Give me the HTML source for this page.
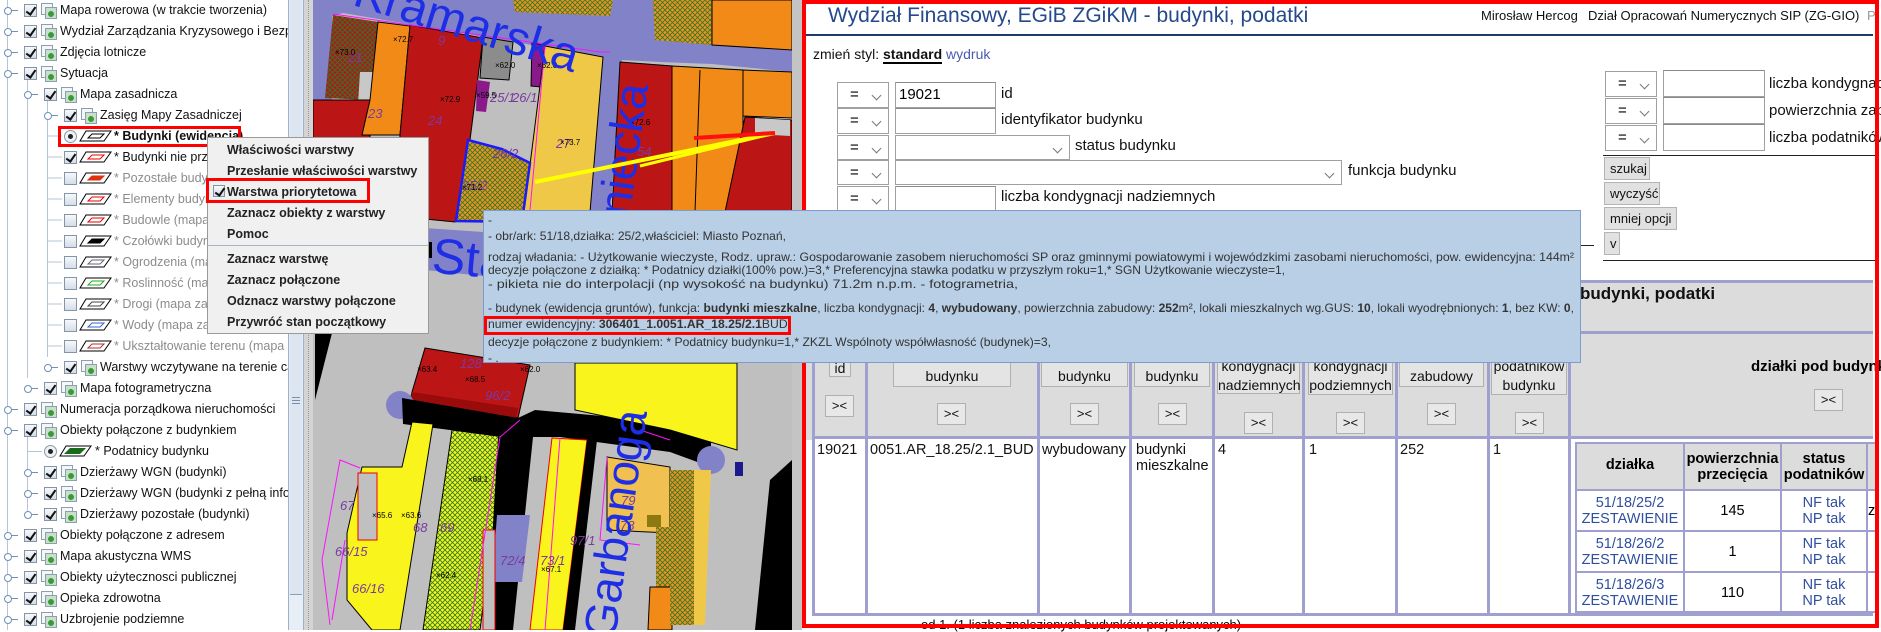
<!DOCTYPE html>
<html><head><meta charset="utf-8">
<style>
*{margin:0;padding:0;box-sizing:border-box}
body{width:1881px;height:630px;overflow:hidden;background:#fff;font-family:"Liberation Sans",Arial,sans-serif;position:relative}
.a{position:absolute}
.row{position:absolute;left:0;width:288px;height:21px;font-size:12.5px;line-height:14px;white-space:nowrap}
.row span.t{position:absolute;top:3px;color:#111}
.row span.g{color:#8c8c8c}
.cb{position:absolute;top:4px;width:13px;height:13px;border:1px solid #8595a8;background:linear-gradient(#f6f8fb,#d5dde8)}
.cb.on::after{content:"";position:absolute;left:3px;top:0px;width:4px;height:8px;border:solid #111;border-width:0 2px 2px 0;transform:rotate(35deg)}
.rd{position:absolute;top:4px;width:13px;height:13px;border-radius:50%;border:1px solid #8a98a8;background:#eef2f6}
.rd::after{content:"";position:absolute;left:3px;top:3px;width:5px;height:5px;border-radius:50%;background:#222}
.ic{position:absolute;top:3px;width:15px;height:15px}
.ic::before{content:"";position:absolute;left:0;top:0;width:10px;height:10px;border:1px solid #8aa0b0;background:#f4f6f8}
.ic::after{content:"";position:absolute;left:4px;top:4px;width:10px;height:10px;border:1px solid #8aa0b0;background:radial-gradient(circle at 50% 60%,#3a9a3a 0 35%,#c8e0c8 40%)}
.hd{position:absolute;top:7px;width:14px;height:7px}
.hd::before{content:"";position:absolute;left:0;top:0;width:6px;height:6px;border:1px solid #6f8fb5;border-radius:50%;background:#fff}
.hd::after{content:"";position:absolute;left:7px;top:3px;width:7px;height:1px;background:#6f8fb5}
.mi{position:absolute;left:227px;font-size:12.5px;font-weight:bold;color:#222;white-space:nowrap}
.sel{position:absolute;border:1px solid #a0a0a0;background:#fff;font-size:15px}
.sel .eq{position:absolute;left:12px;top:3px}
.chev{position:absolute;right:8px;top:9px;width:7px;height:7px;border:solid #777;border-width:0 1px 1px 0;transform:rotate(45deg)}
.inp{position:absolute;border:1px solid #a0a0a0;border-top-color:#8a8a8a;background:#fff;font-size:15px}
.lbl{position:absolute;font-size:15px;color:#111;white-space:nowrap}
.btn{position:absolute;border:1px solid #b4b4b4;background:#e1e1e1;font-size:13px;color:#111;padding:3px 0 0 5px;white-space:nowrap;overflow:hidden}
.hb{position:absolute;border:1px solid #b0b0b0;background:#e4e4e4;font-size:14px;text-align:center;color:#111;line-height:19px}
.xb{position:absolute;width:29px;height:22px;border:1px solid #b0b0b0;background:#e8e8e8;font-size:13px;text-align:center;line-height:20px;color:#111}
.vl{position:absolute;width:3px;background:#9fa0cf}
.dt{position:absolute;font-size:14.5px;color:#111;white-space:nowrap}
.nt{position:absolute;font-size:14.5px;text-align:center;line-height:16px}
.lk{color:#2f4f9f}
</style></head><body>

<svg class="a" style="left:0;top:0" width="1881" height="630" viewBox="0 0 1881 630">
<defs>
<pattern id="hg" width="5" height="5" patternUnits="userSpaceOnUse"><path d="M0 0L5 5M5 0L0 5" stroke="#2a7a2a" stroke-width="0.8"/></pattern>
</defs>
<rect x="313" y="0" width="480" height="630" fill="#bfbfbf"/>
<polygon points="313,0 793,0 793,72 712,64 660,62 622,60 610,215 578,215 590,55 343,13 332,16 332,135 313,135" fill="#8282c8"/>
<polygon points="513,0 613,0 610,16 515,12" fill="#f09020"/><polygon points="513,0 613,0 610,16 515,12" fill="url(#hg)"/>
<polygon points="653,0 712,0 712,45 655,40" fill="#f09020"/><polygon points="653,0 712,0 712,45 655,40" fill="url(#hg)"/>
<polygon points="712,0 792,0 792,50 712,45" fill="#f28a18" stroke="#000" stroke-width="1"/>
<polygon points="333,15 378,22 372,100 325,98" fill="#b01818"/><polygon points="333,15 378,22 372,100 325,98" fill="url(#hg)"/>
<polygon points="360,72 382,72 380,105 358,105" fill="#c8c8c8"/>
<polygon points="313,100 372,100 366,210 313,205" fill="#bb1515" stroke="#000" stroke-width="1"/>
<polygon points="378,22 410,26 400,135 362,135 370,100" fill="#f28a18" stroke="#000" stroke-width="1"/>
<polygon points="410,25 483,38 470,140 455,222 395,216 400,135" fill="#bb1515" stroke="#000" stroke-width="1"/>
<polygon points="483,37 513,42 509,80 480,78" fill="#8c8c8c" stroke="#000" stroke-width="1"/>
<polygon points="477,80 490,82 486,112 476,111" fill="#8a1a8a"/>
<polygon points="532,43 545,45 541,87 531,86" fill="#8a1a8a" stroke="#000" stroke-width="1"/>
<polygon points="545,46 603,57 590,212 522,212 530,165" fill="#f0c848" stroke="#000" stroke-width="1"/>
<polygon points="468,140 502,149 530,163 522,222 456,221" fill="#f09020"/>
<polygon points="468,140 502,149 530,163 522,222 456,221" fill="url(#hg)" stroke="#1a1aff" stroke-width="2.5"/>
<polygon points="620,62 672,66 672,212 612,212" fill="#bb1515" stroke="#000" stroke-width="1"/>
<polygon points="672,66 743,70 743,212 672,212" fill="#f28a18" stroke="#000" stroke-width="1"/>
<polygon points="743,70 792,72 792,118 743,116" fill="#f28a18" stroke="#000" stroke-width="1"/>
<polygon points="745,117 792,120 792,212 725,212" fill="#bb1515" stroke="#000" stroke-width="1"/>
<polygon points="755,118 790,120 790,136 755,134" fill="#c8c8c8"/>
<line x1="700" y1="70" x2="695" y2="212" stroke="#000"/>
<polygon points="425,228 483,232 483,276 425,270" fill="#8282c8"/>
<rect x="427" y="242" width="5" height="16" fill="#000"/>
<polygon points="315,333 332,333 315,400" fill="#000"/>
<polygon points="425,348 530,365 518,418 410,402 412,392" fill="#bb1515" stroke="#000" stroke-width="1"/>
<polygon points="412,392 518,408 516,418 410,402" fill="#9a0c0c"/>
<circle cx="400" cy="405" r="14" fill="#8282c8"/>
<polygon points="402,398 518,418 535,410 670,422 711,433 711,467 670,452 560,437 505,437 403,424" fill="#000"/>
<polygon points="575,363 737,363 737,450 670,430 575,410" fill="#f8f41c" stroke="#000" stroke-width="1"/>
<circle cx="711" cy="460" r="14" fill="#8282c8"/>
<rect x="735" y="462" width="8" height="14" fill="#1a1a8a"/>
<polygon points="412,422 433,424 400,630 372,630 347,600 347,533 362,467 402,467" fill="#f8f41c" stroke="#000" stroke-width="1"/>
<rect x="358" y="473" width="19" height="67" fill="#c0c0c0" stroke="#e00" stroke-width="1"/>
<polygon points="452,430 505,437 480,630 423,630" fill="#f8f41c"/>
<polygon points="452,430 505,437 480,630 423,630" fill="url(#hg)" stroke="#000" stroke-width="1"/>
<polygon points="498,437 533,437 513,630 487,630" fill="#000"/>
<polygon points="497,515 530,515 522,582 492,582" fill="#8282c8"/>
<rect x="483" y="530" width="12" height="100" fill="#c0c0c0" stroke="#e00" stroke-width="1"/>
<polygon points="552,438 587,440 563,630 530,630" fill="#f8f41c" stroke="#e00" stroke-width="1"/>
<polygon points="587,440 597,440 575,630 563,630" fill="#000"/>
<polygon points="607,457 670,467 670,533 607,530" fill="#f0c050" stroke="#000" stroke-width="1"/>
<rect x="647" y="515" width="14" height="12" fill="#8c7a10"/>
<polygon points="656,527 672,527 672,587 656,587" fill="#f09020"/><polygon points="656,527 672,527 672,587 656,587" fill="url(#hg)"/>
<polygon points="650,587 672,587 672,630 648,630" fill="#f28a18" stroke="#000" stroke-width="1"/>
<polygon points="670,470 694,470 694,625 670,625" fill="#f09020"/><polygon points="670,470 694,470 694,625 670,625" fill="url(#hg)"/>
<polygon points="694,470 711,470 705,625 694,625" fill="#f0c848"/>
<polygon points="770,480 792,460 792,630 755,630" fill="#000"/>
<rect x="792" y="0" width="10" height="630" fill="#c4c4c4"/>
<g fill="none" stroke="#ff10ff" stroke-width="1">
<polyline points="333,14 600,52 610,52"/><polyline points="545,46 530,210"/><polyline points="360,468 340,460 322,560 330,625"/>
<polyline points="345,540 332,620"/><polyline points="520,420 500,437 470,630"/><polyline points="607,457 600,540 640,545"/>
<polyline points="640,430 670,440"/><polyline points="560,438 545,630"/>
</g>
<g font-family="Liberation Sans, sans-serif" fill="#7a3aa0" font-size="13" font-style="italic">
<text x="368" y="118">23</text><text x="428" y="125">24</text><text x="438" y="45">9</text><text x="556" y="148">27</text><text x="637" y="156">54</text><text x="348" y="62">21</text>
<text x="490" y="102">25/1</text><text x="512" y="102">26/1</text><text x="493" y="158">26/2</text><text x="462" y="190">25/2</text>
<text x="340" y="510">67</text><text x="413" y="532">68</text><text x="440" y="532">69</text><text x="335" y="556">66/15</text><text x="352" y="593">66/16</text>
<text x="500" y="565">72/4</text><text x="540" y="565">73/1</text><text x="570" y="545">97/1</text><text x="620" y="530">78</text><text x="621" y="505">79</text><text x="460" y="368">128</text><text x="485" y="400">96/2</text>
</g>
<g font-family="Liberation Sans, sans-serif" font-size="8" fill="#000">
<text x="393" y="42">×72.7</text><text x="335" y="55">×73.0</text><text x="476" y="98">×59.5</text><text x="537" y="68">×62.0</text><text x="495" y="68">×62.0</text><text x="440" y="102">×72.9</text><text x="560" y="145">×73.7</text><text x="630" y="125">×72.6</text>
<text x="462" y="190">×71.2</text><text x="520" y="372">×62.0</text><text x="465" y="382">×68.5</text><text x="417" y="372">×63.4</text><text x="372" y="518">×65.6</text><text x="401" y="518">×63.6</text><text x="468" y="482">×68.1</text><text x="436" y="578">×62.4</text><text x="541" y="572">×67.1</text>
</g>
<g font-family="Liberation Sans, sans-serif" fill="#1e2ee6">
<text x="352" y="40" font-size="48" transform="rotate(17 470 20)">Kramarska</text>
<text x="0" y="0" font-size="46" transform="translate(618,300) rotate(-82)">Wroniecka</text>
<text x="433" y="275" font-size="50" transform="rotate(5 460 250)">Stawna</text>
<text x="0" y="0" font-size="46" transform="translate(615,640) rotate(-82)">Garbanoga</text>
</g>
<line x1="535" y1="182" x2="775" y2="133" stroke="#ffff00" stroke-width="4"/>
<line x1="640" y1="166" x2="775" y2="133" stroke="#ffff00" stroke-width="3"/>
<line x1="694" y1="138" x2="775" y2="133" stroke="#ff1010" stroke-width="4"/>
</svg>

<div class="a" style="left:0;top:0;width:289px;height:630px;background:#fff;overflow:hidden">
<div class="a" style="left:7px;top:0;width:1px;height:630px;background:#b6c6d8"></div>
<div class="a" style="left:27px;top:73px;width:1px;height:305px;background:#b6c6d8"></div>
<div class="a" style="left:27px;top:430px;width:1px;height:84px;background:#b6c6d8"></div>
<div class="a" style="left:47px;top:94px;width:1px;height:263px;background:#b6c6d8"></div>

<div class="row" style="top:0"><i class="hd" style="left:4px"></i><i class="cb on" style="left:24px"></i><i class="ic" style="left:41px"></i><span class="t" style="left:60px">Mapa rowerowa (w trakcie tworzenia)</span></div>
<div class="row" style="top:21px"><i class="hd" style="left:4px"></i><i class="cb on" style="left:24px"></i><i class="ic" style="left:41px"></i><span class="t" style="left:60px">Wydział Zarządzania Kryzysowego i Bezpieczeństwa</span></div>
<div class="row" style="top:42px"><i class="hd" style="left:4px"></i><i class="cb on" style="left:24px"></i><i class="ic" style="left:41px"></i><span class="t" style="left:60px">Zdjęcia lotnicze</span></div>
<div class="row" style="top:63px"><i class="hd" style="left:4px"></i><i class="cb on" style="left:24px"></i><i class="ic" style="left:41px"></i><span class="t" style="left:60px">Sytuacja</span></div>
<div class="row" style="top:84px"><i class="hd" style="left:24px"></i><i class="cb on" style="left:44px"></i><i class="ic" style="left:61px"></i><span class="t" style="left:80px">Mapa zasadnicza</span></div>
<div class="row" style="top:105px"><i class="hd" style="left:44px"></i><i class="cb on" style="left:64px"></i><i class="ic" style="left:81px"></i><span class="t" style="left:100px">Zasięg Mapy Zasadniczej</span></div>

<svg class="a" style="left:0;top:126px" width="288" height="231">
<g stroke="#b6c6d8"><line x1="47" y1="10" x2="62" y2="10"/><line x1="47" y1="31" x2="62" y2="31"/><line x1="47" y1="52" x2="62" y2="52"/><line x1="47" y1="73" x2="62" y2="73"/><line x1="47" y1="94" x2="62" y2="94"/><line x1="47" y1="115" x2="62" y2="115"/><line x1="47" y1="136" x2="62" y2="136"/><line x1="47" y1="157" x2="62" y2="157"/><line x1="47" y1="178" x2="62" y2="178"/><line x1="47" y1="199" x2="62" y2="199"/><line x1="47" y1="220" x2="62" y2="220"/></g>
<g stroke-width="1">
<polygon points="86,5 111,5 104,15 80,15" fill="#fff" stroke="#000"/><polygon points="92,8 104,8 100,12 88,12" fill="#fff" stroke="#000"/>
<polygon points="86,26 111,26 104,36 80,36" fill="#fff" stroke="#000"/><polygon points="92,29 104,29 100,33 88,33" fill="#fff" stroke="#e00"/>
<polygon points="86,47 111,47 104,57 80,57" fill="#fff" stroke="#000"/><polygon points="92,50 104,50 100,54 88,54" fill="#e03010" stroke="#e03010"/>
<polygon points="86,68 111,68 104,78 80,78" fill="#fff" stroke="#000"/><polygon points="92,71 104,71 100,75 88,75" fill="#fff" stroke="#e00"/>
<polygon points="86,89 111,89 104,99 80,99" fill="#fff" stroke="#000"/><polygon points="92,92 104,92 100,96 88,96" fill="#fff" stroke="#e00"/>
<polygon points="86,110 111,110 104,120 80,120" fill="#fff" stroke="#000"/><polygon points="92,113 104,113 100,117 88,117" fill="#000" stroke="#000"/>
<polygon points="86,131 111,131 104,141 80,141" fill="#fff" stroke="#000"/><polygon points="92,134 104,134 100,138 88,138" fill="#fff" stroke="#667"/>
<polygon points="86,152 111,152 104,162 80,162" fill="#fff" stroke="#000"/><polygon points="92,155 104,155 100,159 88,159" fill="#fff" stroke="#2a2"/>
<polygon points="86,173 111,173 104,183 80,183" fill="#fff" stroke="#000"/><polygon points="92,176 104,176 100,180 88,180" fill="#fff" stroke="#444"/>
<polygon points="86,194 111,194 104,204 80,204" fill="#fff" stroke="#000"/><polygon points="92,197 104,197 100,201 88,201" fill="#fff" stroke="#36c"/>
<polygon points="86,215 111,215 104,225 80,225" fill="#fff" stroke="#000"/><polygon points="92,218 104,218 100,222 88,222" fill="#fff" stroke="#a33"/>
</g></svg>

<div class="row" style="top:126px"><i class="rd" style="left:64px"></i><span class="t" style="left:114px;font-weight:bold">* Budynki (ewidencja)</span></div>
<div class="row" style="top:147px"><i class="cb on" style="left:64px"></i><span class="t" style="left:114px">* Budynki nie przyjęte</span></div>
<div class="row" style="top:168px"><i class="cb" style="left:64px"></i><span class="t g" style="left:114px">* Pozostałe budynki</span></div>
<div class="row" style="top:189px"><i class="cb" style="left:64px"></i><span class="t g" style="left:114px">* Elementy budynków</span></div>
<div class="row" style="top:210px"><i class="cb" style="left:64px"></i><span class="t g" style="left:114px">* Budowle (mapa zas.)</span></div>
<div class="row" style="top:231px"><i class="cb" style="left:64px"></i><span class="t g" style="left:114px">* Czołówki budynków</span></div>
<div class="row" style="top:252px"><i class="cb" style="left:64px"></i><span class="t g" style="left:114px">* Ogrodzenia (mapa zas.)</span></div>
<div class="row" style="top:273px"><i class="cb" style="left:64px"></i><span class="t g" style="left:114px">* Roslinność (mapa zas.)</span></div>
<div class="row" style="top:294px"><i class="cb" style="left:64px"></i><span class="t g" style="left:114px">* Drogi (mapa zasadnicza)</span></div>
<div class="row" style="top:315px"><i class="cb" style="left:64px"></i><span class="t g" style="left:114px">* Wody (mapa zasadnicza)</span></div>
<div class="row" style="top:336px"><i class="cb" style="left:64px"></i><span class="t g" style="left:114px">* Ukształtowanie terenu (mapa zas.)</span></div>
<div class="row" style="top:357px"><i class="hd" style="left:44px"></i><i class="cb on" style="left:64px"></i><i class="ic" style="left:81px"></i><span class="t" style="left:100px">Warstwy wczytywane na terenie całym</span></div>
<div class="row" style="top:378px"><i class="hd" style="left:24px"></i><i class="cb on" style="left:44px"></i><i class="ic" style="left:61px"></i><span class="t" style="left:80px">Mapa fotogrametryczna</span></div>
<div class="row" style="top:399px"><i class="hd" style="left:4px"></i><i class="cb on" style="left:24px"></i><i class="ic" style="left:41px"></i><span class="t" style="left:60px">Numeracja porządkowa nieruchomości</span></div>
<div class="row" style="top:420px"><i class="hd" style="left:4px"></i><i class="cb on" style="left:24px"></i><i class="ic" style="left:41px"></i><span class="t" style="left:60px">Obiekty połączone z budynkiem</span></div>
<div class="row" style="top:441px"><div class="a" style="left:27px;top:10px;width:15px;height:1px;background:#b6c6d8"></div><i class="rd" style="left:44px"></i>
<svg class="a" style="left:0;top:0" width="100" height="21"><polygon points="66,5 91,5 84,15 60,15" fill="#fff" stroke="#000"/><polygon points="70,7 86,7 80,13 64,13" fill="#1a6a1a"/></svg>
<span class="t" style="left:95px">* Podatnicy budynku</span></div>
<div class="row" style="top:462px"><i class="hd" style="left:24px"></i><i class="cb on" style="left:44px"></i><i class="ic" style="left:61px"></i><span class="t" style="left:80px">Dzierżawy WGN (budynki)</span></div>
<div class="row" style="top:483px"><i class="hd" style="left:24px"></i><i class="cb on" style="left:44px"></i><i class="ic" style="left:61px"></i><span class="t" style="left:80px">Dzierżawy WGN (budynki z pełną informacją)</span></div>
<div class="row" style="top:504px"><i class="hd" style="left:24px"></i><i class="cb on" style="left:44px"></i><i class="ic" style="left:61px"></i><span class="t" style="left:80px">Dzierżawy pozostałe (budynki)</span></div>
<div class="row" style="top:525px"><i class="hd" style="left:4px"></i><i class="cb on" style="left:24px"></i><i class="ic" style="left:41px"></i><span class="t" style="left:60px">Obiekty połączone z adresem</span></div>
<div class="row" style="top:546px"><i class="hd" style="left:4px"></i><i class="cb on" style="left:24px"></i><i class="ic" style="left:41px"></i><span class="t" style="left:60px">Mapa akustyczna WMS</span></div>
<div class="row" style="top:567px"><i class="hd" style="left:4px"></i><i class="cb on" style="left:24px"></i><i class="ic" style="left:41px"></i><span class="t" style="left:60px">Obiekty użytecznosci publicznej</span></div>
<div class="row" style="top:588px"><i class="hd" style="left:4px"></i><i class="cb on" style="left:24px"></i><i class="ic" style="left:41px"></i><span class="t" style="left:60px">Opieka zdrowotna</span></div>
<div class="row" style="top:609px"><i class="hd" style="left:4px"></i><i class="cb on" style="left:24px"></i><i class="ic" style="left:41px"></i><span class="t" style="left:60px">Uzbrojenie podziemne</span></div>
</div>
<div class="a" style="left:288px;top:0;width:16px;height:630px;background:#e8eef5;border-left:1px solid #9eb0c4;border-right:1px solid #9eb0c4"></div>
<div class="a" style="left:290px;top:0;width:12px;height:595px;background:#dde6f0;border-bottom:1px solid #8aa0ba"></div>
<div class="a" style="left:292px;top:397px;width:8px;height:1px;background:#7a8ea8;box-shadow:0 3px 0 #7a8ea8,0 6px 0 #7a8ea8"></div>
<div class="a" style="left:304px;top:0;width:9px;height:630px;background:#d4d4d4"></div>
<div class="a" style="left:308px;top:0;width:1px;height:630px;border-left:1px dotted #999"></div>

<div class="a" style="left:58px;top:126px;width:183px;height:21px;border:3px solid #f00"></div>

<div class="a" style="left:207px;top:137px;width:222px;height:197px;background:#f0f0f0;border:1px solid #9a9a9a"></div>
<div class="mi" style="top:143px">Właściwości warstwy</div>
<div class="mi" style="top:164px">Przesłanie właściwości warstwy</div>
<i class="cb on" style="left:213px;top:185px;width:12px;height:12px"></i>
<div class="mi" style="top:185px">Warstwa priorytetowa</div>
<div class="mi" style="top:206px">Zaznacz obiekty z warstwy</div>
<div class="mi" style="top:227px">Pomoc</div>
<div class="a" style="left:208px;top:245px;width:220px;height:1px;background:#a8b4c4"></div>
<div class="mi" style="top:252px">Zaznacz warstwę</div>
<div class="mi" style="top:273px">Zaznacz połączone</div>
<div class="mi" style="top:294px">Odznacz warstwy połączone</div>
<div class="mi" style="top:315px">Przywróć stan początkowy</div>
<div class="a" style="left:206px;top:178px;width:164px;height:25px;border:3px solid #f00"></div>

<div class="a" style="left:803px;top:0;width:1075px;height:630px;background:#fff"></div>
<div class="a" style="left:828px;top:4px;font-size:21px;color:#244a8c;white-space:nowrap">Wydział Finansowy, EGiB ZGiKM - budynki, podatki</div>
<div class="a" style="left:1481px;top:8px;font-size:13px;color:#111;white-space:nowrap">Mirosław Hercog</div>
<div class="a" style="left:1588px;top:8px;font-size:13px;color:#111;white-space:nowrap">Dział Opracowań Numerycznych SIP (ZG-GIO) <span style="color:#999;margin-left:4px">P</span></div>
<div class="a" style="left:806px;top:34px;width:1067px;height:2px;background:#1e3a6e"></div>
<div class="a" style="left:813px;top:46px;font-size:14px;color:#111;white-space:nowrap">zmień styl: <b style="border-bottom:2px solid #000">standard</b> <span style="color:#4a5ab0">wydruk</span></div>

<div class="sel" style="left:837px;top:82px;width:52px;height:26px"><span class="eq">=</span><i class="chev"></i></div>
<div class="inp" style="left:895px;top:82px;width:101px;height:26px"><span style="position:absolute;left:3px;top:3px">19021</span></div>
<div class="lbl" style="left:1001px;top:85px">id</div>
<div class="sel" style="left:837px;top:108px;width:52px;height:26px"><span class="eq">=</span><i class="chev"></i></div>
<div class="inp" style="left:895px;top:108px;width:101px;height:26px"></div>
<div class="lbl" style="left:1001px;top:111px">identyfikator budynku</div>
<div class="sel" style="left:837px;top:135px;width:52px;height:25px"><span class="eq">=</span><i class="chev"></i></div>
<div class="sel" style="left:895px;top:135px;width:175px;height:25px"><i class="chev"></i></div>
<div class="lbl" style="left:1075px;top:137px">status budynku</div>
<div class="sel" style="left:837px;top:160px;width:52px;height:25px"><span class="eq">=</span><i class="chev"></i></div>
<div class="sel" style="left:895px;top:160px;width:447px;height:25px"><i class="chev"></i></div>
<div class="lbl" style="left:1348px;top:162px">funkcja budynku</div>
<div class="sel" style="left:837px;top:186px;width:52px;height:25px"><span class="eq">=</span><i class="chev"></i></div>
<div class="inp" style="left:895px;top:186px;width:101px;height:25px"></div>
<div class="lbl" style="left:1001px;top:188px">liczba kondygnacji nadziemnych</div>

<div class="sel" style="left:1605px;top:71px;width:52px;height:26px"><span class="eq">=</span><i class="chev"></i></div>
<div class="inp" style="left:1663px;top:70px;width:102px;height:27px"></div>
<div class="lbl" style="left:1769px;top:75px">liczba kondygnacji</div>
<div class="sel" style="left:1605px;top:98px;width:52px;height:26px"><span class="eq">=</span><i class="chev"></i></div>
<div class="inp" style="left:1663px;top:97px;width:102px;height:27px"></div>
<div class="lbl" style="left:1769px;top:102px">powierzchnia zabudowy</div>
<div class="sel" style="left:1605px;top:125px;width:52px;height:26px"><span class="eq">=</span><i class="chev"></i></div>
<div class="inp" style="left:1663px;top:124px;width:102px;height:27px"></div>
<div class="lbl" style="left:1769px;top:129px">liczba podatników</div>
<div class="a" style="left:1603px;top:155px;width:272px;height:1px;background:#222"></div>
<div class="btn" style="left:1604px;top:157px;width:46px;height:23px">szukaj</div>
<div class="btn" style="left:1604px;top:182px;width:56px;height:23px">wyczyść</div>
<div class="btn" style="left:1604px;top:207px;width:73px;height:23px">mniej opcji</div>
<div class="btn" style="left:1604px;top:232px;width:16px;height:23px">v</div>
<div class="a" style="left:1579px;top:245px;width:15px;height:1px;background:#222"></div>
<div class="a" style="left:1603px;top:260px;width:272px;height:1px;background:#222"></div>

<div class="a" style="left:806px;top:280px;width:1067px;height:160px;background:#dcdcdc"></div>
<div class="a" style="left:806px;top:280px;width:1067px;height:3px;background:#9fa0cf"></div>
<div class="a" style="left:806px;top:331px;width:1067px;height:3px;background:#9fa0cf"></div>
<div class="a" style="left:813px;top:436px;width:1060px;height:3px;background:#9fa0cf"></div>
<div class="a" style="left:813px;top:613px;width:1060px;height:3px;background:#9fa0cf"></div>
<div class="a" style="left:813px;top:439px;width:1060px;height:174px;background:#fff"></div>
<div class="a" style="left:1580px;top:284px;font-size:17px;font-weight:bold;color:#111;white-space:nowrap">budynki, podatki</div>
<div class="vl" style="left:812px;top:333px;height:283px"></div>
<div class="vl" style="left:865px;top:333px;height:283px"></div>
<div class="vl" style="left:1037px;top:333px;height:283px"></div>
<div class="vl" style="left:1129px;top:333px;height:283px"></div>
<div class="vl" style="left:1212px;top:333px;height:283px"></div>
<div class="vl" style="left:1302px;top:333px;height:283px"></div>
<div class="vl" style="left:1395px;top:333px;height:283px"></div>
<div class="vl" style="left:1487px;top:333px;height:283px"></div>
<div class="vl" style="left:1568px;top:333px;height:283px"></div>

<div class="hb" style="left:829px;top:340px;width:22px;height:37px;line-height:54px">id</div>
<div class="hb" style="left:893px;top:340px;width:118px;height:47px;line-height:70px">budynku</div>
<div class="hb" style="left:1041px;top:340px;width:87px;height:47px;line-height:70px">budynku</div>
<div class="hb" style="left:1134px;top:340px;width:76px;height:47px;line-height:70px">budynku</div>
<div class="hb" style="left:1217px;top:340px;width:83px;height:54px;padding-top:16px">kondygnacji<br>nadziemnych</div>
<div class="hb" style="left:1308px;top:340px;width:85px;height:55px;padding-top:16px">kondygnacji<br>podziemnych</div>
<div class="hb" style="left:1399px;top:340px;width:85px;height:47px;line-height:70px">zabudowy</div>
<div class="hb" style="left:1491px;top:340px;width:76px;height:55px;padding-top:16px">podatników<br>budynku</div>
<div class="a" style="left:1751px;top:358px;font-size:15px;font-weight:bold;white-space:nowrap">działki pod budynkiem</div>
<div class="xb" style="left:825px;top:395px">&gt;&lt;</div>
<div class="xb" style="left:937px;top:403px">&gt;&lt;</div>
<div class="xb" style="left:1070px;top:403px">&gt;&lt;</div>
<div class="xb" style="left:1158px;top:403px">&gt;&lt;</div>
<div class="xb" style="left:1244px;top:412px">&gt;&lt;</div>
<div class="xb" style="left:1336px;top:412px">&gt;&lt;</div>
<div class="xb" style="left:1427px;top:403px">&gt;&lt;</div>
<div class="xb" style="left:1515px;top:412px">&gt;&lt;</div>
<div class="xb" style="left:1814px;top:389px">&gt;&lt;</div>

<div class="dt" style="left:817px;top:442px">19021</div>
<div class="dt" style="left:870px;top:442px">0051.AR_18.25/2.1_BUD</div>
<div class="dt" style="left:1042px;top:442px">wybudowany</div>
<div class="dt" style="left:1136px;top:442px;line-height:16px">budynki<br>mieszkalne</div>
<div class="dt" style="left:1218px;top:442px">4</div>
<div class="dt" style="left:1309px;top:442px">1</div>
<div class="dt" style="left:1400px;top:442px">252</div>
<div class="dt" style="left:1493px;top:442px">1</div>

<div class="a" style="left:1575px;top:442px;width:300px;height:171px;border:2px solid #9fa0cf;border-right:none;background:#fff"></div>
<div class="a" style="left:1577px;top:444px;width:298px;height:45px;background:#dcdcdc"></div>
<div class="a" style="left:1577px;top:489px;width:298px;height:2px;background:#9fa0cf"></div>
<div class="a" style="left:1577px;top:530px;width:298px;height:2px;background:#9fa0cf"></div>
<div class="a" style="left:1577px;top:571px;width:298px;height:2px;background:#9fa0cf"></div>
<div class="a" style="left:1683px;top:444px;width:2px;height:169px;background:#9fa0cf"></div>
<div class="a" style="left:1780px;top:444px;width:2px;height:169px;background:#9fa0cf"></div>
<div class="a" style="left:1866px;top:444px;width:2px;height:169px;background:#9fa0cf"></div>
<div class="nt" style="left:1577px;top:457px;width:106px;font-weight:bold">działka</div>
<div class="nt" style="left:1685px;top:451px;width:95px;font-weight:bold">powierzchnia<br>przecięcia</div>
<div class="nt" style="left:1782px;top:451px;width:84px;font-weight:bold">status<br>podatników</div>
<div class="nt lk" style="left:1577px;top:495px;width:106px">51/18/25/2<br>ZESTAWIENIE</div>
<div class="nt" style="left:1685px;top:503px;width:95px">145</div>
<div class="nt lk" style="left:1782px;top:495px;width:84px">NF tak<br>NP tak</div>
<div class="nt lk" style="left:1577px;top:536px;width:106px">51/18/26/2<br>ZESTAWIENIE</div>
<div class="nt" style="left:1685px;top:544px;width:95px">1</div>
<div class="nt lk" style="left:1782px;top:536px;width:84px">NF tak<br>NP tak</div>
<div class="nt lk" style="left:1577px;top:577px;width:106px">51/18/26/3<br>ZESTAWIENIE</div>
<div class="nt" style="left:1685px;top:585px;width:95px">110</div>
<div class="nt lk" style="left:1782px;top:577px;width:84px">NF tak<br>NP tak</div>
<div class="nt" style="left:1868px;top:503px;width:10px;text-align:left">z</div>
<div class="a" style="left:921px;top:617px;font-size:13px;white-space:nowrap">od 1. (1 liczba znalezionych budynków projektowanych)</div>

<div class="a" style="left:802px;top:0;width:1077px;height:628px;border:4px solid #f00"></div>

<div class="a" style="left:483px;top:210px;width:1098px;height:153px;background:#b8cfe6;border:1px solid #7d9ccc;overflow:hidden">
<svg width="1098" height="153" style="position:absolute;left:0;top:0" font-family="Liberation Sans, sans-serif" font-size="12" fill="#333">
<text x="4" y="13">-</text>
<text x="4" y="29" textLength="298" lengthAdjust="spacingAndGlyphs">- obr/ark: 51/18,działka: 25/2,właściciel: Miasto Poznań,</text>
<text x="4" y="50" textLength="1086" lengthAdjust="spacingAndGlyphs">rodzaj władania: - Użytkowanie wieczyste, Rodz. upraw.: Gospodarowanie zasobem nieruchomości SP oraz gminnymi powiatowymi i wojewódzkimi zasobami nieruchomości, pow. ewidencyjna: 144m²</text>
<text x="4" y="63" textLength="797" lengthAdjust="spacingAndGlyphs">decyzje połączone z działką: * Podatnicy działki(100% pow.)=3,* Preferencyjna stawka podatku w przyszłym roku=1,* SGN Użytkowanie wieczyste=1,</text>
<text x="4" y="77" textLength="530" lengthAdjust="spacingAndGlyphs">- pikieta nie do interpolacji (np wysokość na budynku) 71.2m n.p.m. - fotogrametria,</text>
<text x="4" y="101" textLength="1086" lengthAdjust="spacingAndGlyphs">- budynek (ewidencja gruntów), funkcja: <tspan font-weight="bold">budynki mieszkalne</tspan>, liczba kondygnacji: <tspan font-weight="bold">4</tspan>, <tspan font-weight="bold">wybudowany</tspan>, powierzchnia zabudowy: <tspan font-weight="bold">252</tspan>m², lokali mieszkalnych wg.GUS: <tspan font-weight="bold">10</tspan>, lokali wyodrębnionych: <tspan font-weight="bold">1</tspan>, bez KW: <tspan font-weight="bold">0</tspan>,</text>
<text x="4" y="117" textLength="303" lengthAdjust="spacingAndGlyphs">numer ewidencyjny: <tspan font-weight="bold">306401_1.0051.AR_18.25/2.1</tspan>BUD,</text>
<text x="4" y="135" textLength="563" lengthAdjust="spacingAndGlyphs">decyzje połączone z budynkiem: * Podatnicy budynku=1,* ZKZL Wspólnoty współwłasność (budynek)=3,</text>
<text x="4" y="151">- ,</text>
</svg>
</div>
<div class="a" style="left:484px;top:316px;width:307px;height:19px;border:3px solid #f00"></div>
</body></html>
